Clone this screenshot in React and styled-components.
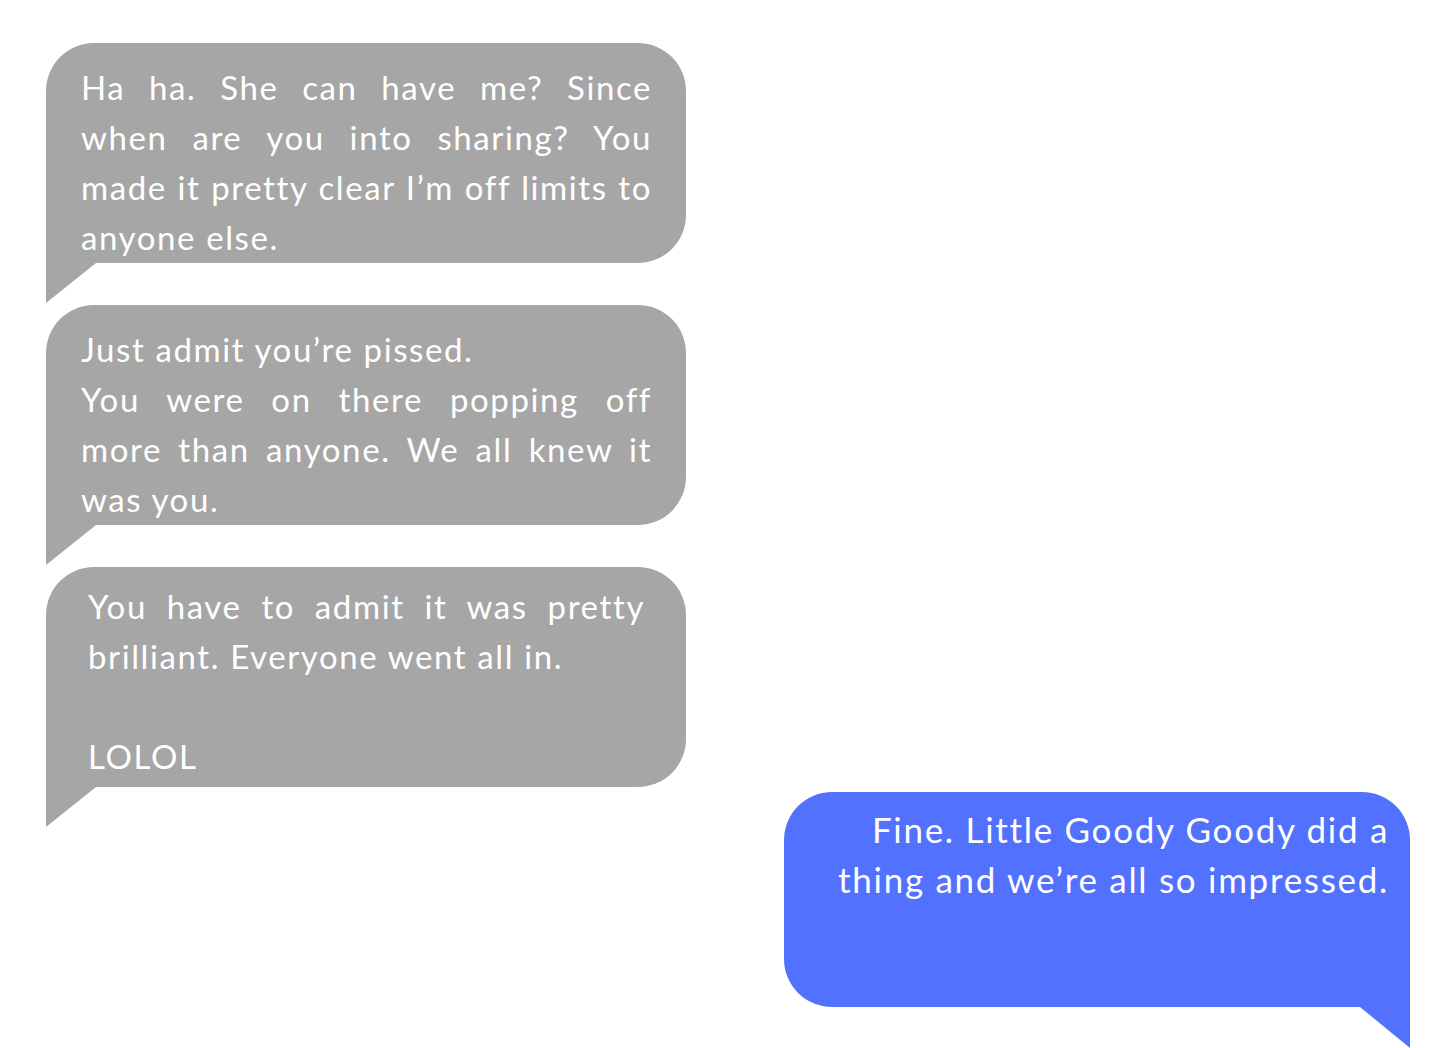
import React from 'react';
import styled, { createGlobalStyle } from 'styled-components';

const GlobalStyle = createGlobalStyle`
  html, body {
    margin: 0;
    padding: 0;
    background: #ffffff;
  }
  body {
    font-family: Lato, "Noto Sans", "Liberation Sans", sans-serif;
  }
`;

const Thread = styled.div`
  width: 1456px;
  height: 1048px;
  box-sizing: border-box;
  padding: 43px 46px 0;
  display: flex;
  flex-direction: column;
  gap: 2px;
  overflow: hidden;
`;

const Message = styled.div`
  display: flex;
  flex-direction: column;
  align-items: ${p => (p.$mine ? 'flex-end' : 'flex-start')};
  margin-top: ${p => p.$pull || 0}px;
`;

const Bubble = styled.div`
  box-sizing: border-box;
  width: ${p => p.$width}px;
  height: ${p => p.$height}px;
  padding: ${p => p.$pad};
  background: ${p => (p.$mine ? '#5271ff' : '#a6a6a6')};
  border-radius: ${p => (p.$mine ? '48px 48px 0 48px' : '48px 48px 48px 0')};
  color: #ffffff;
  font-size: ${p => (p.$mine ? 35 : 33)}px;
  line-height: 50px;
  letter-spacing: ${p => (p.$mine ? 1.7 : 1.6)}px;
  font-weight: 400;
  text-align: ${p => (p.$mine ? 'right' : 'left')};
`;

// a line that is stretched edge to edge, as the justified lines of the reference
const Line = styled.div`
  height: 50px;
  white-space: nowrap;
  text-align: ${p => (p.$fill ? 'justify' : 'inherit')};
  text-align-last: ${p => (p.$fill ? 'justify' : 'auto')};
`;

const Tail = styled.div`
  width: 50px;
  height: ${p => (p.$mine ? 41 : 40)}px;
  background: ${p => (p.$mine ? '#5271ff' : '#a6a6a6')};
  clip-path: ${p =>
    p.$mine
      ? 'polygon(0 0, 100% 0, 100% 100%)'
      : 'polygon(0 0, 100% 0, 0 100%)'};
`;

const messages = [
  {
    id: 1,
    pad: '19px 34px 0 35px',
    lines: [
      ['Ha ha. She can have me? Since', true],
      ['when are you into sharing? You', true],
      ['made it pretty clear I\u2019m off limits to', true],
      ['anyone else.', false],
    ],
  },
  {
    id: 2,
    pad: '19px 34px 0 35px',
    lines: [
      ['Just admit you\u2019re pissed.', false],
      ['You were on there popping off', true],
      ['more than anyone. We all knew it', true],
      ['was you.', false],
    ],
  },
  {
    id: 3,
    pad: '14px 41px 0 42px',
    lines: [
      ['You have to admit it was pretty', true],
      ['brilliant. Everyone went all in.', false],
      ['', false],
      ['LOLOL', false],
    ],
  },
];

export default function App() {
  return (
    <>
      <GlobalStyle />
      <Thread>
        {messages.map(m => (
          <Message key={m.id}>
            <Bubble $width={640} $height={220} $pad={m.pad}>
              {m.lines.map(([text, fill], i) => (
                <Line key={i} $fill={fill}>{text}</Line>
              ))}
            </Bubble>
            <Tail />
          </Message>
        ))}
        <Message $mine $pull={-37}>
          <Bubble $mine $width={626} $height={215} $pad="12px 21px 0 30px">
            <Line>Fine. Little Goody Goody did a</Line>
            <Line>thing and we&rsquo;re all so impressed.</Line>
          </Bubble>
          <Tail $mine />
        </Message>
      </Thread>
    </>
  );
}
